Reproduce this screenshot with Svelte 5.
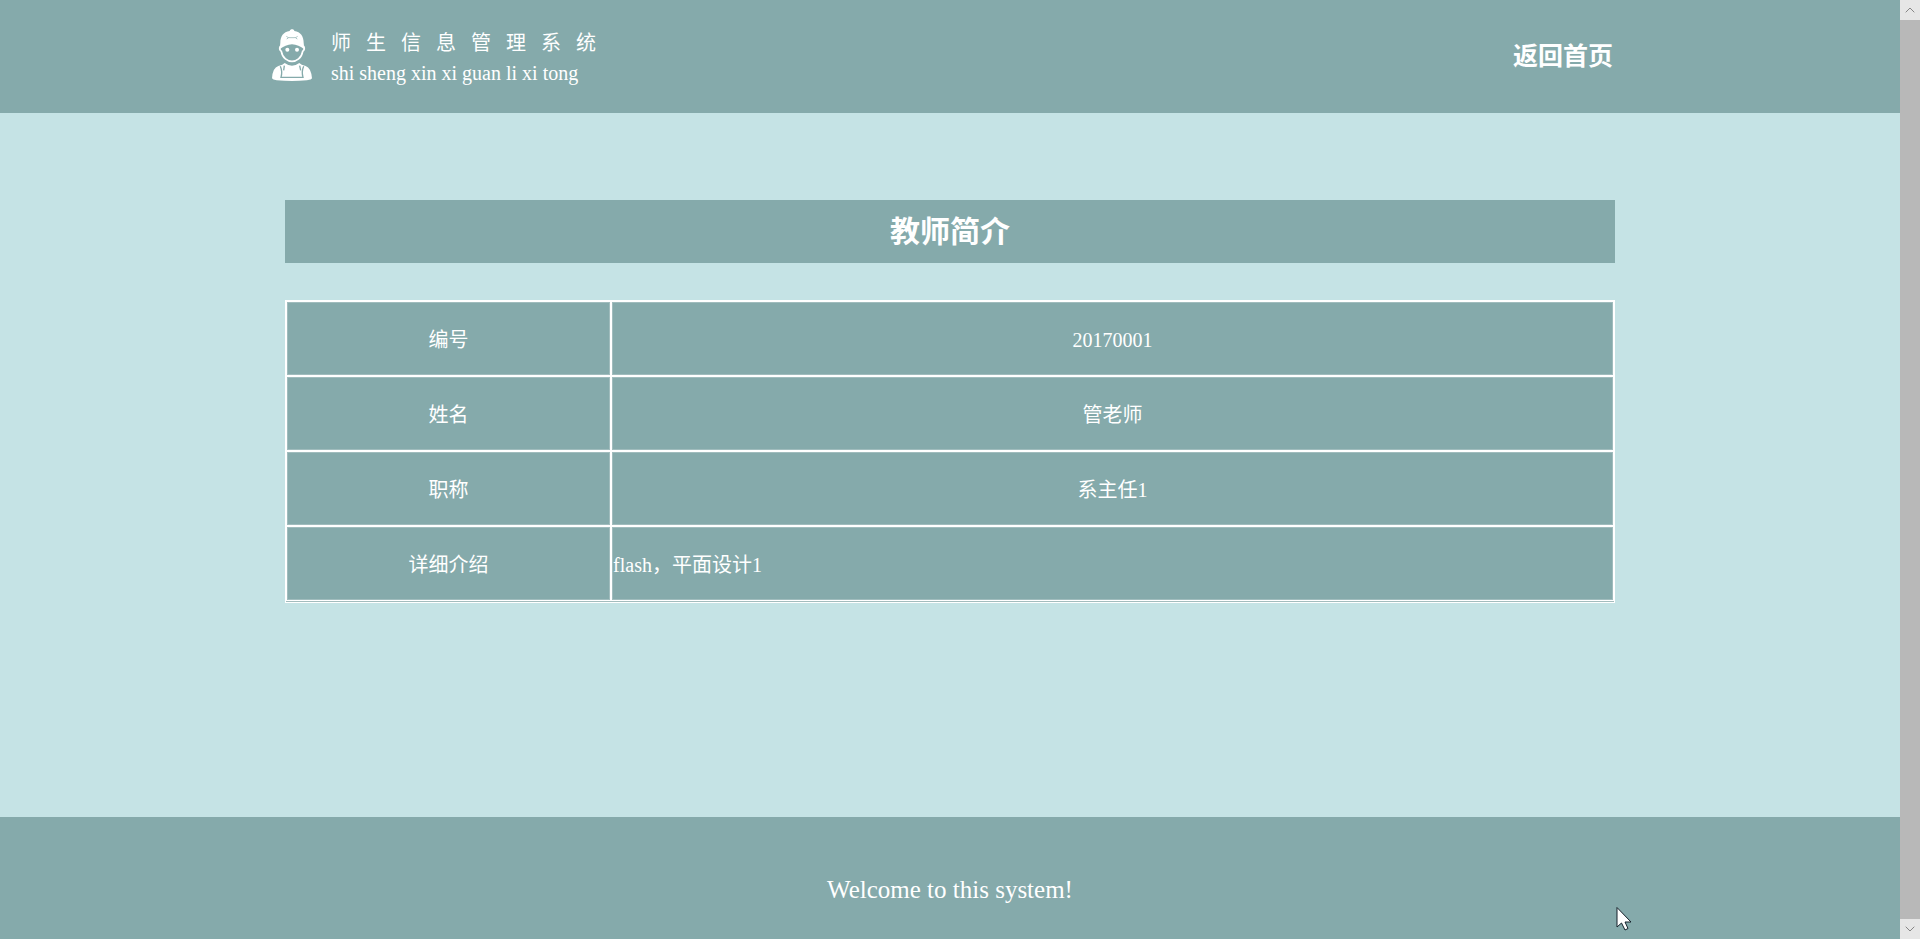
<script>
  const rows = [
    { label: '编号', value: '20170001' },
    { label: '姓名', value: '管老师' },
    { label: '职称', value: '系主任1' },
    { label: '详细介绍', value: 'flash，平面设计1', long: true }
  ];
  const systemName = [...'师生信息管理系统'].join('\u00a0\u00a0\u00a0');
</script>

<div class="window">
  <div class="page">
    <header>
      <div class="brand">
        <svg class="logo" viewBox="0 0 120 156" aria-hidden="true">
          <path class="fill" d="M53 6C54-1 67-1 67 6C86 8 95 23 95 41L97 61Q80 47 60 46Q40 47 23 61L25 41C25 23 34 8 53 6Z" />
          <path class="shade" d="M43 22Q48 27 54 26H66Q72 27 77 22M44 30L49 27M76 30L71 27" />
          <path class="face" d="M25 51Q20 61 28 67C31 87 47 97 60 97S89 87 92 67Q100 61 95 51" />
          <circle class="fill" cx="46" cy="62" r="6" />
          <circle class="fill" cx="75" cy="62" r="6" />
          <path class="fill" d="M38 102Q60 118 82 102Q87 108 101 111Q117 116 120 148Q119 152 105 154Q60 158 14 154Q2 152 0 148Q2 116 19 111Q33 108 38 102Z" />
          <path class="strap" d="M25 112Q32 128 27 145H93Q88 128 95 112M37 110L35 124M83 110L86 124" />
        </svg>
        <div class="names">
          <span>{systemName}</span>
          <span>shi sheng xin xi guan li xi tong</span>
        </div>
      </div>
      <a class="home" href="#home">返回首页</a>
    </header>

    <main>
      <h1>教师简介</h1>
      <table>
        <tbody>
          {#each rows as row}
            <tr>
              <th scope="row">{row.label}</th>
              <td class:long={row.long}>{row.value}</td>
            </tr>
          {/each}
        </tbody>
      </table>
    </main>

    <footer>Welcome to this system!</footer>
  </div>

  <div class="scrollbar">
    <button aria-label="向上滚动">
      <svg viewBox="0 0 10 6"><path d="M0.7 5.3L5 1L9.3 5.3" /></svg>
    </button>
    <div class="thumb"></div>
    <button aria-label="向下滚动">
      <svg viewBox="0 0 10 6"><path d="M0.7 0.7L5 5L9.3 0.7" /></svg>
    </button>
  </div>

  <svg class="pointer" viewBox="0 0 16 24" aria-hidden="true">
    <path d="M1 1V20.5L5.5 16.5L9 23.5L12 22L9 15.5H15Z" />
  </svg>
</div>

<style>
  :global(body) {
    margin: 0;
    background: #c5e3e5;
  }

  .window {
    position: relative;
    display: flex;
    min-height: 100vh;
    color: #fff;
    font-family: 'Liberation Serif', 'Noto Sans CJK SC', serif;
    font-size: 20px;
    line-height: 30px;
  }

  .page {
    flex: 1;
    display: flex;
    flex-direction: column;
  }

  header {
    display: flex;
    align-items: center;
    justify-content: space-between;
    box-sizing: border-box;
    min-height: 113px;
    padding: 0 calc(15% + 2px) 0 272px;
    background: #85aaab;
  }

  .brand {
    display: flex;
    align-items: center;
    gap: 19px;
  }

  .logo {
    width: 40px;
    height: 52px;
    margin-bottom: 4px;
  }

  .fill {
    fill: #fff;
  }

  .face {
    fill: none;
    stroke: #fff;
    stroke-width: 5;
  }

  .shade,
  .strap {
    fill: none;
    stroke: #85aaab;
    stroke-width: 2;
  }

  .strap {
    stroke-width: 4;
  }

  .names {
    display: flex;
    flex-direction: column;
    padding-top: 2px;
  }

  .names span {
    white-space: nowrap;
  }

  .home {
    color: inherit;
    font-size: 25px;
    font-weight: bold;
    text-decoration: none;
  }

  main {
    flex: 1;
    width: 70%;
    margin: 0 auto;
    padding: 87px 0;
    box-sizing: border-box;
  }

  h1 {
    margin: 0 0 37px;
    background: #85aaab;
    font-size: 30px;
    line-height: 63px;
    text-align: center;
  }

  table {
    width: 100%;
    table-layout: fixed;
    border-spacing: 2px;
    padding-bottom: 1px;
    background: linear-gradient(#a3bcbd, #a3bcbd) 1px calc(100% - 1px) / calc(100% - 2px) 1px no-repeat #fff;
  }

  th,
  td {
    box-sizing: border-box;
    height: 73px;
    padding: 2px 0 0;
    border: 1px solid #a0bcbd;
    background: #85aaab;
    font-weight: normal;
    text-align: center;
  }

  th {
    width: 24.4%;
  }

  .long {
    text-align: left;
  }

  footer {
    padding: 58px 0 34px;
    background: #85aaab;
    font-size: 25px;
    text-align: center;
  }

  .scrollbar {
    display: flex;
    flex-direction: column;
    width: 20px;
    background: #e6e6e6;
  }

  .scrollbar button {
    display: grid;
    place-items: center;
    height: 20px;
    padding: 0;
    border: 0;
    background: #e6e6e6;
  }

  .scrollbar svg {
    width: 10px;
    height: 6px;
    fill: none;
    stroke: #858585;
  }

  .thumb {
    flex: 1;
    background: #b8b8b8;
  }

  .pointer {
    position: absolute;
    left: 1616px;
    top: 906px;
    width: 16px;
    height: 25px;
    fill: #fff;
    stroke: #14202a;
    pointer-events: none;
  }
</style>
